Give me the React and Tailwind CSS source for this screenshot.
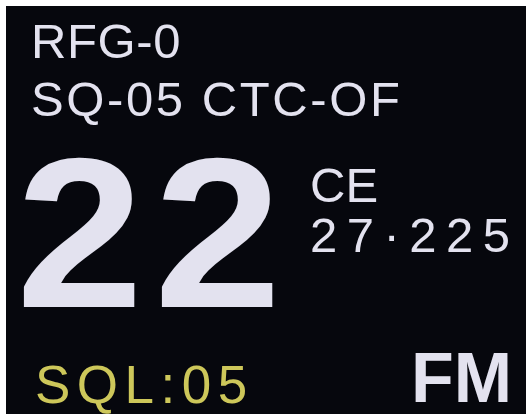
const lcd = { fontFamily: '"Liberation Sans", Arial, sans-serif' };

export default function App() {
  return (
    <div className="w-[526px] h-[414px] bg-white pt-[6px] pl-[6px] overflow-hidden" style={lcd}>
      <div className="w-full h-full bg-[#06070d] text-[#e3e2ef] flex flex-col">
        {/* Status lines */}
        <div className="pt-[6px] pl-[25px]">
          <div className="text-[49px] leading-[58px] tracking-[0.6px] whitespace-nowrap">RFG-0</div>
          <div className="text-[49px] leading-[58px] tracking-[2.6px] whitespace-nowrap">SQ-05 CTC-OF</div>
        </div>

        {/* Channel + frequency */}
        <div className="flex pl-[10px]">
          <div className="w-[294px] shrink-0 text-[214px] leading-[210px] font-bold tracking-[10px] origin-left scale-x-[1.07]">22</div>
          <div className="pt-[32px] flex flex-col">
            <div className="text-[49px] leading-[50px] whitespace-nowrap">CE</div>
            <div className="text-[49px] leading-[50px] tracking-[9.5px] whitespace-nowrap">27·225</div>
          </div>
        </div>

        {/* Bottom row */}
        <div className="flex justify-between items-start pl-[29px] pr-[14px]">
          <div className="mt-[20px] text-[53px] leading-none tracking-[6.5px] text-[#cdc75a] whitespace-nowrap">SQL:05</div>
          <div className="mt-[10px] text-[70px] leading-[60px] font-bold whitespace-nowrap">FM</div>
        </div>
      </div>
    </div>
  );
}
